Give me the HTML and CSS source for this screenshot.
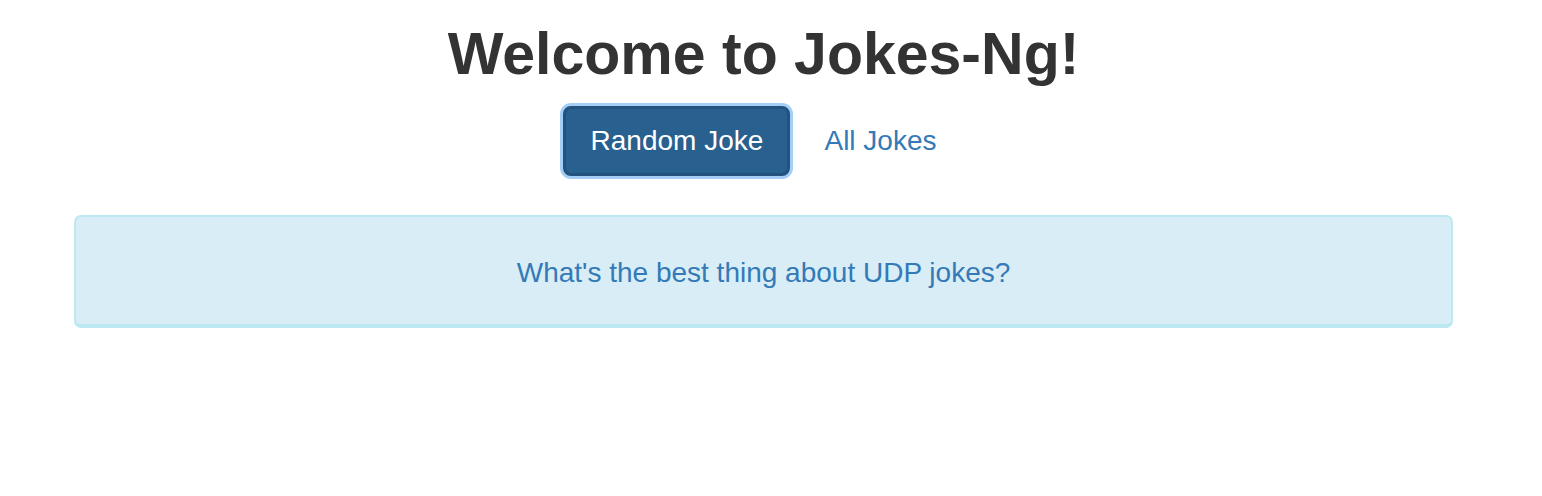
FILE: index.html
```html
<!DOCTYPE html>
<html>
<head>
<meta charset="utf-8">
<title>Jokes-Ng</title>
<link rel="stylesheet" href="styles.css">
</head>
<body>
<div class="container">
  <h1 class="title">Welcome to Jokes-Ng!</h1>
  <nav class="nav">
    <a class="btn-primary" href="#">Random Joke</a>
    <a class="nav-link" href="#">All Jokes</a>
  </nav>
  <div class="alert">
    <a class="joke" href="#">What's the best thing about UDP jokes?</a>
  </div>
</div>
</body>
</html>
```

FILE: styles.css
```css
html, body {
  margin: 0;
  padding: 0;
  background: #fff;
}
body {
  font-family: "Liberation Sans", Arial, Helvetica, sans-serif;
  color: #333;
}
.container {
  width: 1379px;
  margin-left: 74px;
  display: flex;
  flex-direction: column;
  align-items: center;
}
.title {
  margin: 22px 0 0 0;
  font-size: 59px;
  line-height: 65px;
  font-weight: bold;
  color: #333;
  letter-spacing: 0;
}
.nav {
  margin-top: 19px;
  display: flex;
  align-items: center;
}
.btn-primary {
  display: flex;
  align-items: center;
  justify-content: center;
  box-sizing: border-box;
  width: 227px;
  height: 70px;
  background: #286090;
  border: 3px solid #22527d;
  border-radius: 8px;
  box-shadow: 0 0 0 3px #a3cff7;
  color: #fff;
  font-size: 28px;
  text-decoration: none;
}
.nav-link {
  padding: 0 27px 0 34px;
  color: #337ab7;
  font-size: 28px;
  text-decoration: none;
}
.alert {
  margin-top: 39px;
  box-sizing: border-box;
  width: 1379px;
  height: 113px;
  background: #d9edf7;
  border: 2px solid #bce8f1;
  border-bottom-width: 4px;
  border-radius: 7px;
  display: flex;
  align-items: center;
  justify-content: center;
}
.joke {
  color: #337ab7;
  font-size: 28px;
  text-decoration: none;
  margin-top: 4px;
}
```
